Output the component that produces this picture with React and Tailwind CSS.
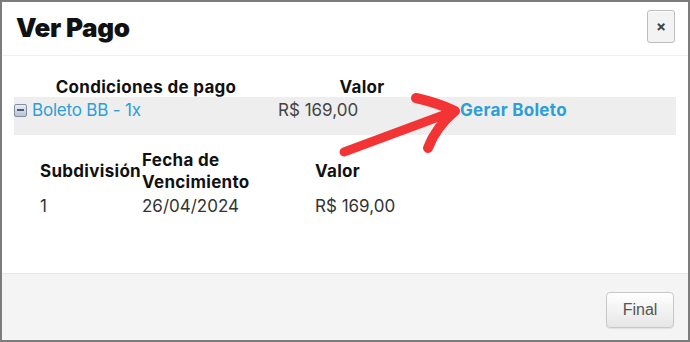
export default function App() {
  return (
    <div className="relative flex h-[342px] w-[690px] flex-col border-2 border-[#7c7c7c] bg-white font-['Inter',sans-serif]">
      {/* header */}
      <div className="flex h-[54px] items-start justify-between border-b border-[#eeeeee] pl-[14px] pr-[12px] pt-[8px]">
        <h1 className="mt-[3px] text-[26px] font-black leading-[30px] tracking-[-0.3px] text-[#111]">Ver Pago</h1>
        <button className="mr-[1px] flex h-[33px] w-[28px] items-center justify-center rounded-[3px] border border-[#bdbdbd] bg-[#f3f3f3] text-[15px] font-bold leading-none text-[#444] shadow-[inset_0_1px_0_#fff]">
          ×
        </button>
      </div>

      {/* body */}
      <div className="flex-1 px-[12px] pt-[21px]">
        <div className="flex h-[20px] text-[17px] font-bold leading-[20px] tracking-[0.3px] text-[#111]">
          <div className="w-[264px] text-center">Condiciones de pago</div>
          <div className="w-[168px] text-center">Valor</div>
        </div>
        <div className="flex h-[38px] items-start bg-[#eeeeee] pt-[3px] text-[17px] leading-[20px]">
          <div className="flex h-[20px] w-[264px] items-center gap-[5px]">
            <span className="flex h-[13px] w-[13px] items-center justify-center rounded-[2px] border border-[#7f8fa4] bg-gradient-to-b from-[#e9eef4] to-[#b7c4d3]">
              <span className="h-[2px] w-[7px] bg-[#4b5b71]" />
            </span>
            <span className="tracking-[-0.2px] text-[#2c9ed8]">Boleto BB - 1x</span>
          </div>
          <div className="w-[168px] text-[#444]">R$ 169,00</div>
          <div className="pl-[14px] font-bold tracking-[0.3px] text-[#2c9ed8]">Gerar Boleto</div>
        </div>

        <div className="ml-[26px] mt-[14px] text-[17px] text-[#111]">
          <div className="flex h-[44px] items-center font-bold leading-[22px] tracking-[0.3px]">
            <div className="w-[102px]">Subdivisión</div>
            <div className="w-[173px]">
              Fecha de
              <br />
              Vencimiento
            </div>
            <div>Valor</div>
          </div>
          <div className="flex pt-[3px] leading-[20px] text-[#333]">
            <div className="w-[102px]">1</div>
            <div className="w-[173px]">26/04/2024</div>
            <div>R$ 169,00</div>
          </div>
        </div>
      </div>

      {/* footer */}
      <div className="flex h-[67px] items-start justify-end border-t border-[#e6e6e6] bg-[#f4f4f4] px-[14px] pt-[18px]">
        <button className="h-[36px] w-[68px] rounded-[4px] border border-[#c8c8c8] bg-gradient-to-b from-[#ffffff] to-[#e6e6e6] font-['Liberation_Sans',sans-serif] text-[16px] text-[#555] shadow-[0_1px_1px_rgba(0,0,0,0.08)]">
          Final
        </button>
      </div>

      {/* annotation arrow */}
      <svg className="pointer-events-none absolute left-[-2px] top-[-2px]" width="690" height="342" viewBox="0 0 690 342">
        <g fill="none" stroke="#f23434" strokeLinecap="round" strokeLinejoin="round">
          <path d="M344 152 L449 113" strokeWidth="9" />
          <path d="M416 98 Q438 103 455 111 Q436 127 428 148" strokeWidth="10" />
        </g>
      </svg>
    </div>
  )
}
